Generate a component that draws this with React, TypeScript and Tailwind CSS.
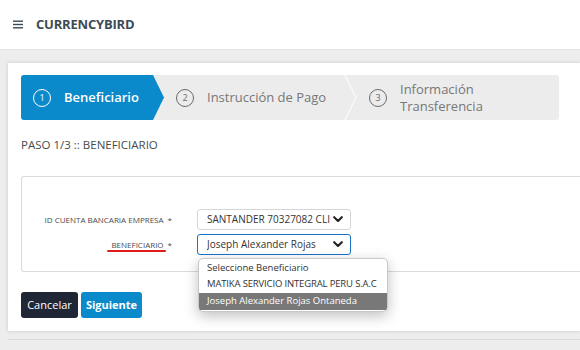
import React from "react";

const font = { fontFamily: '"Open Sans", "Noto Sans", sans-serif' };

function Circle({ n, active }: { n: number; active?: boolean }) {
  return (
    <span
      className={
        "flex items-center justify-center w-[18px] h-[18px] rounded-full border text-[9px] shrink-0 " +
        (active ? "border-white text-white" : "border-[#6b6b6b] text-[#6b6b6b]")
      }
    >
      {n}
    </span>
  );
}

function Chevron() {
  return (
    <svg width="10" height="7" viewBox="0 0 10 7">
      <path d="M1.2 1.2 L5 5 L8.8 1.2" stroke="#222" strokeWidth="2.1" fill="none" strokeLinecap="round" strokeLinejoin="round" />
    </svg>
  );
}

export default function App() {
  return (
    <div className="w-[580px] h-[350px] overflow-hidden bg-[#ededed] relative" style={font}>
      {/* header */}
      <div className="h-[50px] bg-white flex items-center pl-[13px] border-b border-[#e2e2e2]">
        <svg width="10" height="9" viewBox="0 0 10 9" className="mr-[13px]">
          <rect x="0" y="0.5" width="10" height="1.4" fill="#3d4a55" />
          <rect x="0" y="3.8" width="10" height="1.4" fill="#3d4a55" />
          <rect x="0" y="7.1" width="10" height="1.4" fill="#3d4a55" />
        </svg>
        <span className="text-[13px] font-bold text-[#3d4a55] tracking-[-0.2px]">CURRENCYBIRD</span>
      </div>

      {/* card */}
      <div className="ml-[8px] mt-[13px] bg-white h-[268px] shadow-[0_0_4px_rgba(0,0,0,0.15)] pl-[13px] pt-[12px]">
        {/* stepper */}
        <div className="relative w-[538px] h-[45px] bg-[#ececec] rounded-[3px] flex items-center overflow-hidden">
          <svg className="absolute left-0 top-0" width="538" height="45">
            <path d="M0 0 H132 L143 22.5 L132 45 H0 Z" fill="#0b8acb" />
            <path d="M324 0 L335 22.5 L324 45" fill="none" stroke="#ffffff" strokeWidth="1" />
          </svg>
          <div className="relative flex items-center h-full pl-[12px] w-[143px]">
            <Circle n={1} active />
            <span className="ml-[13px] text-[13px] text-white font-semibold">Beneficiario</span>
          </div>
          <div className="relative flex items-center h-full pl-[12px] w-[193px]">
            <Circle n={2} />
            <span className="ml-[13px] text-[13px] text-[#777]">Instrucción de Pago</span>
          </div>
          <div className="relative flex items-center h-full pl-[12px]">
            <Circle n={3} />
            <span className="ml-[13px] text-[13px] text-[#777] leading-[17px]">
              Información
              <br />
              Transferencia
            </span>
          </div>
        </div>

        <div className="mt-[16px] text-[11.5px] text-[#4a4a4a]">PASO 1/3 :: BENEFICIARIO</div>

        {/* form box */}
        <div className="mt-[23px] h-[96px] border border-[#d9dcdc] border-r-0 rounded-tl-[3px] rounded-bl-[3px] relative">
          <div className="flex items-center h-[21px] mt-[32px]">
            <div className="w-[150px] text-right text-[8px] text-[#4a4a4a] whitespace-nowrap">
              ID CUENTA BANCARIA EMPRESA <span className="ml-[2px]">*</span>
            </div>
            <div className="ml-[25px] w-[154px] h-[21px] border border-[#d6d6d6] rounded-[3px] flex items-center pl-[9px] pr-[7px] text-[10px] text-[#333]">
              <span className="flex-1 whitespace-nowrap overflow-hidden">SANTANDER 70327082 CLI</span>
              <Chevron />
            </div>
          </div>
          <div className="flex items-center h-[21px] mt-[4px]">
            <div className="w-[150px] text-right text-[8px] text-[#4a4a4a] whitespace-nowrap">
              <span className="relative">
                BENEFICIARIO
                <span className="absolute left-[-4px] right-[-2px] top-[11px] h-[2.5px] bg-[#e01b1b] rounded" />
              </span>
              <span className="ml-[4px]">*</span>
            </div>
            <div className="ml-[25px] w-[154px] h-[21px] border border-[#1a73c8] rounded-[3px] flex items-center pl-[9px] pr-[7px] text-[10px] text-[#333]">
              <span className="flex-1 whitespace-nowrap overflow-hidden">Joseph Alexander Rojas</span>
              <Chevron />
            </div>
          </div>
        </div>

        {/* buttons */}
        <div className="flex mt-[20px] gap-[3px]">
          <button className="h-[26px] w-[57px] bg-[#1f2635] text-white text-[11px] rounded-[3px]">Cancelar</button>
          <button className="h-[26px] w-[61px] bg-[#0b8acb] text-white text-[11px] font-bold rounded-[3px]">Siguiente</button>
        </div>
      </div>

      <div className="mt-[8px] h-px bg-[#dcdcdc] ml-[8px]" />

      {/* dropdown */}
      <div className="absolute left-[198px] top-[258px] w-[190px] bg-white rounded-[5px] border border-[#c8c8c8] shadow-[0_4px_14px_rgba(0,0,0,0.25)] overflow-hidden py-[1px] text-[9.5px]">
        <div className="h-[16px] flex items-center pl-[8px] text-[#333]">Seleccione Beneficiario</div>
        <div className="h-[17px] flex items-center pl-[8px] text-[#333] whitespace-nowrap tracking-[-0.15px]">MATIKA SERVICIO INTEGRAL PERU S.A.C</div>
        <div className="h-[17px] flex items-center pl-[8px] bg-[#787878] text-white">Joseph Alexander Rojas Ontaneda</div>
      </div>
    </div>
  );
}
